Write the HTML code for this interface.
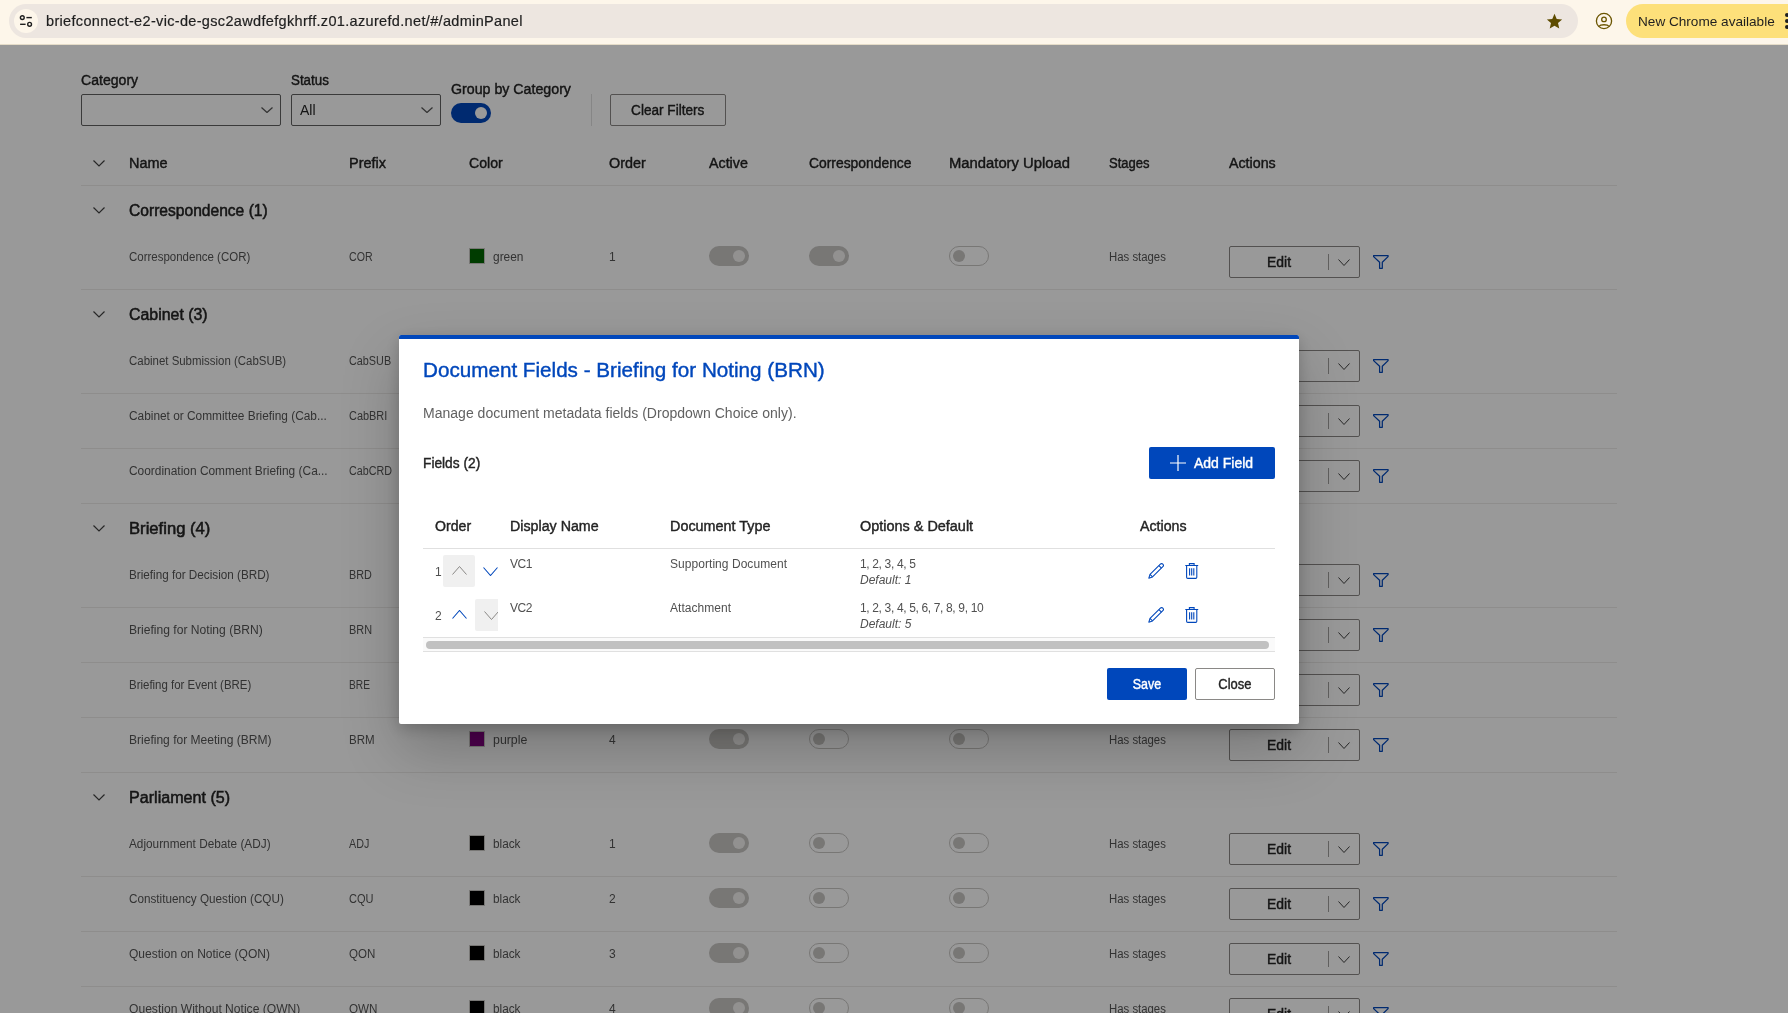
<!DOCTYPE html>
<html><head><meta charset="utf-8">
<style>
html,body{margin:0;padding:0}
svg{display:block}
body{width:1788px;height:1013px;overflow:hidden;position:relative;font-family:"Liberation Sans",sans-serif;background:#fff;color:#242424}
.a{position:absolute;white-space:nowrap}
.t{position:absolute;white-space:nowrap;line-height:20px;height:20px}
#chrome{will-change:transform;position:absolute;left:0;top:0;width:1788px;height:45px;background:#fdf6ea;overflow:hidden}
#app{position:absolute;left:0;top:0;width:1788px;height:1013px;background:#fff;overflow:hidden;will-change:transform}
#ov{position:absolute;left:0;top:45px;width:1788px;height:968px;background:rgba(0,0,0,.4)}
.lbl{font-size:14px;-webkit-text-stroke:0.4px #242424;color:#242424}
.hd{font-size:14px;-webkit-text-stroke:0.4px #242424;color:#242424}
.grp{font-size:15.6px;-webkit-text-stroke:0.5px #242424;color:#242424}
.cell{font-size:12px;color:#555;transform-origin:0 50%}
.line{position:absolute;left:81px;width:1536px;height:1px;background:#edebe9}
.dd{position:absolute;box-sizing:border-box;border:1px solid #616161;border-radius:2px;height:32px;top:94px}
.tg{position:absolute;box-sizing:border-box;width:40px;height:20px;border-radius:10px}
.tg.on{background:#c8c6c4}
.tg.on:after{content:"";position:absolute;right:4px;top:4px;width:12px;height:12px;border-radius:6px;background:#f3f2f1}
.tg.off{border:1px solid #c8c6c4;background:transparent}
.tg.off:after{content:"";position:absolute;left:3px;top:3px;width:12px;height:12px;border-radius:6px;background:#c8c6c4}
.sw{position:absolute;width:16px;height:16px;box-sizing:border-box;border:1px solid #c8c6c4}
.eb{position:absolute;box-sizing:border-box;width:131px;height:32px;border:1px solid #8a8886;border-radius:2px;background:#fff}
.eb .e{position:absolute;left:0;width:99px;top:0;line-height:30px;text-align:center;font-size:14px;-webkit-text-stroke:0.4px #242424;color:#242424}
.eb .dv{position:absolute;left:98px;top:7px;width:1px;height:16px;background:#a19f9d}
.eb svg{position:absolute;left:108px;top:12px}
#modal{will-change:transform;position:absolute;left:399px;top:335px;width:900px;height:389px;background:#fff;border-radius:2px;box-shadow:0 25.6px 57.6px rgba(0,0,0,.22),0 4.8px 14.4px rgba(0,0,0,.18);overflow:hidden}
#modal .bar{position:absolute;left:0;top:0;width:900px;height:4px;background:#0047bb}
.mt{font-size:12px;letter-spacing:-0.3px;color:#505050}
.mh{font-size:14px;-webkit-text-stroke:0.4px #242424;color:#242424}
</style></head><body>
<div id="app">
<div class="t lbl" style="left:81px;top:70px;;transform:scaleX(1.0053);transform-origin:0 50%">Category</div>
<div class="t lbl" style="left:291px;top:70px;;transform:scaleX(0.9525);transform-origin:0 50%">Status</div>
<div class="t lbl" style="left:451px;top:79px;;transform:scaleX(1.0143);transform-origin:0 50%">Group by Category</div>
<div class="dd" style="left:81px;width:200px"><div class="a" style="left:179px;top:12px"><svg width="12" height="6" viewBox="0 0 12 6"><path d="M0.5 0.5 L6.0 5.5 L11.5 0.5" fill="none" stroke="#555" stroke-width="1.25"/></svg></div></div>
<div class="dd" style="left:291px;width:150px"><div class="t" style="left:8px;top:5px;font-size:14px;color:#242424">All</div><div class="a" style="left:129px;top:12px"><svg width="12" height="6" viewBox="0 0 12 6"><path d="M0.5 0.5 L6.0 5.5 L11.5 0.5" fill="none" stroke="#555" stroke-width="1.25"/></svg></div></div>
<div class="a" style="left:451px;top:103px;width:40px;height:20px;border-radius:10px;background:#0047bb"><div class="a" style="left:24px;top:4px;width:12px;height:12px;border-radius:6px;background:#fff"></div></div>
<div class="a" style="left:591px;top:94px;width:1px;height:32px;background:#e0e0e0"></div>
<div class="a" style="left:610px;top:94px;width:116px;height:32px;box-sizing:border-box;border:1px solid #8a8886;border-radius:2px;line-height:30px;text-align:center;font-size:14px;-webkit-text-stroke:0.4px #242424;color:#242424"><span style="display:inline-block;transform:scaleX(0.9711)">Clear Filters</span></div>
<div class="a" style="left:93px;top:160px"><svg width="12" height="6.5" viewBox="0 0 12 6.5"><path d="M0.5 0.5 L6.0 6.0 L11.5 0.5" fill="none" stroke="#424242" stroke-width="1.2"/></svg></div>
<div class="t hd" style="left:129px;top:153px;;transform:scaleX(1.0333);transform-origin:0 50%">Name</div>
<div class="t hd" style="left:349px;top:153px;;transform:scaleX(1.0343);transform-origin:0 50%">Prefix</div>
<div class="t hd" style="left:469px;top:153px;;transform:scaleX(1.0059);transform-origin:0 50%">Color</div>
<div class="t hd" style="left:609px;top:153px;;transform:scaleX(1.0250);transform-origin:0 50%">Order</div>
<div class="t hd" style="left:709px;top:153px;;transform:scaleX(1.0184);transform-origin:0 50%">Active</div>
<div class="t hd" style="left:809px;top:153px;;transform:scaleX(0.9904);transform-origin:0 50%">Correspondence</div>
<div class="t hd" style="left:949px;top:153px;;transform:scaleX(1.0575);transform-origin:0 50%">Mandatory Upload</div>
<div class="t hd" style="left:1109px;top:153px;;transform:scaleX(0.9318);transform-origin:0 50%">Stages</div>
<div class="t hd" style="left:1229px;top:153px;;transform:scaleX(1.0174);transform-origin:0 50%">Actions</div>
<div class="line" style="top:185px"></div>
<div class="a" style="left:93px;top:207px"><svg width="12" height="6.5" viewBox="0 0 12 6.5"><path d="M0.5 0.5 L6.0 6.0 L11.5 0.5" fill="none" stroke="#424242" stroke-width="1.2"/></svg></div>
<div class="t grp" style="left:129px;top:201px;;transform:scaleX(1.0000);transform-origin:0 50%">Correspondence (1)</div>
<div class="t cell" style="left:129px;top:247px;transform:scaleX(0.9571)">Correspondence (COR)</div>
<div class="t cell" style="left:349px;top:247px;transform:scaleX(0.8846)">COR</div>
<div class="sw" style="left:469px;top:247.5px;background:#006400"></div>
<div class="t cell" style="left:493px;top:247px;transform:scaleX(0.9933)">green</div>
<div class="t cell" style="left:609px;top:247px;">1</div>
<div class="tg on" style="left:709px;top:246px"></div>
<div class="tg on" style="left:809px;top:246px"></div>
<div class="tg off" style="left:949px;top:246px"></div>
<div class="t cell" style="left:1109px;top:247px;transform:scaleX(0.9475)">Has stages</div>
<div class="eb" style="left:1229px;top:246px"><div class="e"><span style="display:inline-block;transform:scaleX(0.9958)">Edit</span></div><div class="dv"></div><svg width="12" height="7" viewBox="0 0 12 7"><path d="M0.5 0.5 L6.0 6.5 L11.5 0.5" fill="none" stroke="#424242" stroke-width="1"/></svg></div>
<div class="a" style="left:1373px;top:254px"><svg width="17" height="16" viewBox="0 0 17 16"><path d="M0.6 1.6 H15.1 V2.6 L9.3 8.3 V14.3 H6.6 V8.3 L0.6 2.6 Z" fill="none" stroke="#0047bb" stroke-width="1.25" stroke-linejoin="round"/></svg></div>
<div class="line" style="top:289px"></div>
<div class="a" style="left:93px;top:311px"><svg width="12" height="6.5" viewBox="0 0 12 6.5"><path d="M0.5 0.5 L6.0 6.0 L11.5 0.5" fill="none" stroke="#424242" stroke-width="1.2"/></svg></div>
<div class="t grp" style="left:129px;top:305px;;transform:scaleX(1.0195);transform-origin:0 50%">Cabinet (3)</div>
<div class="t cell" style="left:129px;top:351px;transform:scaleX(0.9537)">Cabinet Submission (CabSUB)</div>
<div class="t cell" style="left:349px;top:351px;transform:scaleX(0.9022)">CabSUB</div>
<div class="sw" style="left:469px;top:351.5px;background:#000"></div>
<div class="t cell" style="left:493px;top:351px;transform:scaleX(0.9821)">black</div>
<div class="t cell" style="left:609px;top:351px;">1</div>
<div class="tg on" style="left:709px;top:350px"></div>
<div class="tg off" style="left:809px;top:350px"></div>
<div class="tg off" style="left:949px;top:350px"></div>
<div class="t cell" style="left:1109px;top:351px;transform:scaleX(0.9475)">Has stages</div>
<div class="eb" style="left:1229px;top:350px"><div class="e"><span style="display:inline-block;transform:scaleX(0.9958)">Edit</span></div><div class="dv"></div><svg width="12" height="7" viewBox="0 0 12 7"><path d="M0.5 0.5 L6.0 6.5 L11.5 0.5" fill="none" stroke="#424242" stroke-width="1"/></svg></div>
<div class="a" style="left:1373px;top:358px"><svg width="17" height="16" viewBox="0 0 17 16"><path d="M0.6 1.6 H15.1 V2.6 L9.3 8.3 V14.3 H6.6 V8.3 L0.6 2.6 Z" fill="none" stroke="#0047bb" stroke-width="1.25" stroke-linejoin="round"/></svg></div>
<div class="line" style="top:393px"></div>
<div class="t cell" style="left:129px;top:406px;transform:scaleX(0.9889)">Cabinet or Committee Briefing (Cab...</div>
<div class="t cell" style="left:349px;top:406px;transform:scaleX(0.9098)">CabBRI</div>
<div class="sw" style="left:469px;top:406.5px;background:#000"></div>
<div class="t cell" style="left:493px;top:406px;transform:scaleX(0.9821)">black</div>
<div class="t cell" style="left:609px;top:406px;">2</div>
<div class="tg on" style="left:709px;top:405px"></div>
<div class="tg off" style="left:809px;top:405px"></div>
<div class="tg off" style="left:949px;top:405px"></div>
<div class="t cell" style="left:1109px;top:406px;transform:scaleX(0.9475)">Has stages</div>
<div class="eb" style="left:1229px;top:405px"><div class="e"><span style="display:inline-block;transform:scaleX(0.9958)">Edit</span></div><div class="dv"></div><svg width="12" height="7" viewBox="0 0 12 7"><path d="M0.5 0.5 L6.0 6.5 L11.5 0.5" fill="none" stroke="#424242" stroke-width="1"/></svg></div>
<div class="a" style="left:1373px;top:413px"><svg width="17" height="16" viewBox="0 0 17 16"><path d="M0.6 1.6 H15.1 V2.6 L9.3 8.3 V14.3 H6.6 V8.3 L0.6 2.6 Z" fill="none" stroke="#0047bb" stroke-width="1.25" stroke-linejoin="round"/></svg></div>
<div class="line" style="top:448px"></div>
<div class="t cell" style="left:129px;top:461px;transform:scaleX(0.9930)">Coordination Comment Briefing (Ca...</div>
<div class="t cell" style="left:349px;top:461px;transform:scaleX(0.8958)">CabCRD</div>
<div class="sw" style="left:469px;top:461.5px;background:#000"></div>
<div class="t cell" style="left:493px;top:461px;transform:scaleX(0.9821)">black</div>
<div class="t cell" style="left:609px;top:461px;">3</div>
<div class="tg on" style="left:709px;top:460px"></div>
<div class="tg off" style="left:809px;top:460px"></div>
<div class="tg off" style="left:949px;top:460px"></div>
<div class="t cell" style="left:1109px;top:461px;transform:scaleX(0.9475)">Has stages</div>
<div class="eb" style="left:1229px;top:460px"><div class="e"><span style="display:inline-block;transform:scaleX(0.9958)">Edit</span></div><div class="dv"></div><svg width="12" height="7" viewBox="0 0 12 7"><path d="M0.5 0.5 L6.0 6.5 L11.5 0.5" fill="none" stroke="#424242" stroke-width="1"/></svg></div>
<div class="a" style="left:1373px;top:468px"><svg width="17" height="16" viewBox="0 0 17 16"><path d="M0.6 1.6 H15.1 V2.6 L9.3 8.3 V14.3 H6.6 V8.3 L0.6 2.6 Z" fill="none" stroke="#0047bb" stroke-width="1.25" stroke-linejoin="round"/></svg></div>
<div class="line" style="top:503px"></div>
<div class="a" style="left:93px;top:525px"><svg width="12" height="6.5" viewBox="0 0 12 6.5"><path d="M0.5 0.5 L6.0 6.0 L11.5 0.5" fill="none" stroke="#424242" stroke-width="1.2"/></svg></div>
<div class="t grp" style="left:129px;top:519px;;transform:scaleX(1.0667);transform-origin:0 50%">Briefing (4)</div>
<div class="t cell" style="left:129px;top:565px;transform:scaleX(0.9755)">Briefing for Decision (BRD)</div>
<div class="t cell" style="left:349px;top:565px;transform:scaleX(0.9000)">BRD</div>
<div class="sw" style="left:469px;top:565.5px;background:#000"></div>
<div class="t cell" style="left:493px;top:565px;transform:scaleX(0.9821)">black</div>
<div class="t cell" style="left:609px;top:565px;">1</div>
<div class="tg on" style="left:709px;top:564px"></div>
<div class="tg off" style="left:809px;top:564px"></div>
<div class="tg off" style="left:949px;top:564px"></div>
<div class="t cell" style="left:1109px;top:565px;transform:scaleX(0.9475)">Has stages</div>
<div class="eb" style="left:1229px;top:564px"><div class="e"><span style="display:inline-block;transform:scaleX(0.9958)">Edit</span></div><div class="dv"></div><svg width="12" height="7" viewBox="0 0 12 7"><path d="M0.5 0.5 L6.0 6.5 L11.5 0.5" fill="none" stroke="#424242" stroke-width="1"/></svg></div>
<div class="a" style="left:1373px;top:572px"><svg width="17" height="16" viewBox="0 0 17 16"><path d="M0.6 1.6 H15.1 V2.6 L9.3 8.3 V14.3 H6.6 V8.3 L0.6 2.6 Z" fill="none" stroke="#0047bb" stroke-width="1.25" stroke-linejoin="round"/></svg></div>
<div class="line" style="top:607px"></div>
<div class="t cell" style="left:129px;top:620px;transform:scaleX(1.0076)">Briefing for Noting (BRN)</div>
<div class="t cell" style="left:349px;top:620px;transform:scaleX(0.9083)">BRN</div>
<div class="sw" style="left:469px;top:620.5px;background:#000"></div>
<div class="t cell" style="left:493px;top:620px;transform:scaleX(0.9821)">black</div>
<div class="t cell" style="left:609px;top:620px;">2</div>
<div class="tg on" style="left:709px;top:619px"></div>
<div class="tg off" style="left:809px;top:619px"></div>
<div class="tg off" style="left:949px;top:619px"></div>
<div class="t cell" style="left:1109px;top:620px;transform:scaleX(0.9475)">Has stages</div>
<div class="eb" style="left:1229px;top:619px"><div class="e"><span style="display:inline-block;transform:scaleX(0.9958)">Edit</span></div><div class="dv"></div><svg width="12" height="7" viewBox="0 0 12 7"><path d="M0.5 0.5 L6.0 6.5 L11.5 0.5" fill="none" stroke="#424242" stroke-width="1"/></svg></div>
<div class="a" style="left:1373px;top:627px"><svg width="17" height="16" viewBox="0 0 17 16"><path d="M0.6 1.6 H15.1 V2.6 L9.3 8.3 V14.3 H6.6 V8.3 L0.6 2.6 Z" fill="none" stroke="#0047bb" stroke-width="1.25" stroke-linejoin="round"/></svg></div>
<div class="line" style="top:662px"></div>
<div class="t cell" style="left:129px;top:675px;transform:scaleX(0.9551)">Briefing for Event (BRE)</div>
<div class="t cell" style="left:349px;top:675px;transform:scaleX(0.8500)">BRE</div>
<div class="sw" style="left:469px;top:675.5px;background:#000"></div>
<div class="t cell" style="left:493px;top:675px;transform:scaleX(0.9821)">black</div>
<div class="t cell" style="left:609px;top:675px;">3</div>
<div class="tg on" style="left:709px;top:674px"></div>
<div class="tg off" style="left:809px;top:674px"></div>
<div class="tg off" style="left:949px;top:674px"></div>
<div class="t cell" style="left:1109px;top:675px;transform:scaleX(0.9475)">Has stages</div>
<div class="eb" style="left:1229px;top:674px"><div class="e"><span style="display:inline-block;transform:scaleX(0.9958)">Edit</span></div><div class="dv"></div><svg width="12" height="7" viewBox="0 0 12 7"><path d="M0.5 0.5 L6.0 6.5 L11.5 0.5" fill="none" stroke="#424242" stroke-width="1"/></svg></div>
<div class="a" style="left:1373px;top:682px"><svg width="17" height="16" viewBox="0 0 17 16"><path d="M0.6 1.6 H15.1 V2.6 L9.3 8.3 V14.3 H6.6 V8.3 L0.6 2.6 Z" fill="none" stroke="#0047bb" stroke-width="1.25" stroke-linejoin="round"/></svg></div>
<div class="line" style="top:717px"></div>
<div class="t cell" style="left:129px;top:730px;transform:scaleX(1.0028)">Briefing for Meeting (BRM)</div>
<div class="t cell" style="left:349px;top:730px;transform:scaleX(0.9600)">BRM</div>
<div class="sw" style="left:469px;top:730.5px;background:#800080"></div>
<div class="t cell" style="left:493px;top:730px;transform:scaleX(1.0303)">purple</div>
<div class="t cell" style="left:609px;top:730px;">4</div>
<div class="tg on" style="left:709px;top:729px"></div>
<div class="tg off" style="left:809px;top:729px"></div>
<div class="tg off" style="left:949px;top:729px"></div>
<div class="t cell" style="left:1109px;top:730px;transform:scaleX(0.9475)">Has stages</div>
<div class="eb" style="left:1229px;top:729px"><div class="e"><span style="display:inline-block;transform:scaleX(0.9958)">Edit</span></div><div class="dv"></div><svg width="12" height="7" viewBox="0 0 12 7"><path d="M0.5 0.5 L6.0 6.5 L11.5 0.5" fill="none" stroke="#424242" stroke-width="1"/></svg></div>
<div class="a" style="left:1373px;top:737px"><svg width="17" height="16" viewBox="0 0 17 16"><path d="M0.6 1.6 H15.1 V2.6 L9.3 8.3 V14.3 H6.6 V8.3 L0.6 2.6 Z" fill="none" stroke="#0047bb" stroke-width="1.25" stroke-linejoin="round"/></svg></div>
<div class="line" style="top:772px"></div>
<div class="a" style="left:93px;top:794px"><svg width="12" height="6.5" viewBox="0 0 12 6.5"><path d="M0.5 0.5 L6.0 6.0 L11.5 0.5" fill="none" stroke="#424242" stroke-width="1.2"/></svg></div>
<div class="t grp" style="left:129px;top:788px;;transform:scaleX(1.0330);transform-origin:0 50%">Parliament (5)</div>
<div class="t cell" style="left:129px;top:834px;transform:scaleX(0.9826)">Adjournment Debate (ADJ)</div>
<div class="t cell" style="left:349px;top:834px;transform:scaleX(0.8955)">ADJ</div>
<div class="sw" style="left:469px;top:834.5px;background:#000"></div>
<div class="t cell" style="left:493px;top:834px;transform:scaleX(0.9821)">black</div>
<div class="t cell" style="left:609px;top:834px;">1</div>
<div class="tg on" style="left:709px;top:833px"></div>
<div class="tg off" style="left:809px;top:833px"></div>
<div class="tg off" style="left:949px;top:833px"></div>
<div class="t cell" style="left:1109px;top:834px;transform:scaleX(0.9475)">Has stages</div>
<div class="eb" style="left:1229px;top:833px"><div class="e"><span style="display:inline-block;transform:scaleX(0.9958)">Edit</span></div><div class="dv"></div><svg width="12" height="7" viewBox="0 0 12 7"><path d="M0.5 0.5 L6.0 6.5 L11.5 0.5" fill="none" stroke="#424242" stroke-width="1"/></svg></div>
<div class="a" style="left:1373px;top:841px"><svg width="17" height="16" viewBox="0 0 17 16"><path d="M0.6 1.6 H15.1 V2.6 L9.3 8.3 V14.3 H6.6 V8.3 L0.6 2.6 Z" fill="none" stroke="#0047bb" stroke-width="1.25" stroke-linejoin="round"/></svg></div>
<div class="line" style="top:876px"></div>
<div class="t cell" style="left:129px;top:889px;transform:scaleX(0.9753)">Constituency Question (CQU)</div>
<div class="t cell" style="left:349px;top:889px;transform:scaleX(0.9192)">CQU</div>
<div class="sw" style="left:469px;top:889.5px;background:#000"></div>
<div class="t cell" style="left:493px;top:889px;transform:scaleX(0.9821)">black</div>
<div class="t cell" style="left:609px;top:889px;">2</div>
<div class="tg on" style="left:709px;top:888px"></div>
<div class="tg off" style="left:809px;top:888px"></div>
<div class="tg off" style="left:949px;top:888px"></div>
<div class="t cell" style="left:1109px;top:889px;transform:scaleX(0.9475)">Has stages</div>
<div class="eb" style="left:1229px;top:888px"><div class="e"><span style="display:inline-block;transform:scaleX(0.9958)">Edit</span></div><div class="dv"></div><svg width="12" height="7" viewBox="0 0 12 7"><path d="M0.5 0.5 L6.0 6.5 L11.5 0.5" fill="none" stroke="#424242" stroke-width="1"/></svg></div>
<div class="a" style="left:1373px;top:896px"><svg width="17" height="16" viewBox="0 0 17 16"><path d="M0.6 1.6 H15.1 V2.6 L9.3 8.3 V14.3 H6.6 V8.3 L0.6 2.6 Z" fill="none" stroke="#0047bb" stroke-width="1.25" stroke-linejoin="round"/></svg></div>
<div class="line" style="top:931px"></div>
<div class="t cell" style="left:129px;top:944px;transform:scaleX(1.0014)">Question on Notice (QON)</div>
<div class="t cell" style="left:349px;top:944px;transform:scaleX(0.9630)">QON</div>
<div class="sw" style="left:469px;top:944.5px;background:#000"></div>
<div class="t cell" style="left:493px;top:944px;transform:scaleX(0.9821)">black</div>
<div class="t cell" style="left:609px;top:944px;">3</div>
<div class="tg on" style="left:709px;top:943px"></div>
<div class="tg off" style="left:809px;top:943px"></div>
<div class="tg off" style="left:949px;top:943px"></div>
<div class="t cell" style="left:1109px;top:944px;transform:scaleX(0.9475)">Has stages</div>
<div class="eb" style="left:1229px;top:943px"><div class="e"><span style="display:inline-block;transform:scaleX(0.9958)">Edit</span></div><div class="dv"></div><svg width="12" height="7" viewBox="0 0 12 7"><path d="M0.5 0.5 L6.0 6.5 L11.5 0.5" fill="none" stroke="#424242" stroke-width="1"/></svg></div>
<div class="a" style="left:1373px;top:951px"><svg width="17" height="16" viewBox="0 0 17 16"><path d="M0.6 1.6 H15.1 V2.6 L9.3 8.3 V14.3 H6.6 V8.3 L0.6 2.6 Z" fill="none" stroke="#0047bb" stroke-width="1.25" stroke-linejoin="round"/></svg></div>
<div class="line" style="top:986px"></div>
<div class="t cell" style="left:129px;top:999px;transform:scaleX(1.0076)">Question Without Notice (QWN)</div>
<div class="t cell" style="left:349px;top:999px;transform:scaleX(0.9724)">QWN</div>
<div class="sw" style="left:469px;top:999.5px;background:#000"></div>
<div class="t cell" style="left:493px;top:999px;transform:scaleX(0.9821)">black</div>
<div class="t cell" style="left:609px;top:999px;">4</div>
<div class="tg on" style="left:709px;top:998px"></div>
<div class="tg off" style="left:809px;top:998px"></div>
<div class="tg off" style="left:949px;top:998px"></div>
<div class="t cell" style="left:1109px;top:999px;transform:scaleX(0.9475)">Has stages</div>
<div class="eb" style="left:1229px;top:998px"><div class="e"><span style="display:inline-block;transform:scaleX(0.9958)">Edit</span></div><div class="dv"></div><svg width="12" height="7" viewBox="0 0 12 7"><path d="M0.5 0.5 L6.0 6.5 L11.5 0.5" fill="none" stroke="#424242" stroke-width="1"/></svg></div>
<div class="a" style="left:1373px;top:1006px"><svg width="17" height="16" viewBox="0 0 17 16"><path d="M0.6 1.6 H15.1 V2.6 L9.3 8.3 V14.3 H6.6 V8.3 L0.6 2.6 Z" fill="none" stroke="#0047bb" stroke-width="1.25" stroke-linejoin="round"/></svg></div>
<div class="line" style="top:1041px"></div>
</div>
<div id="ov"></div>
<div id="chrome">
  <div class="a" style="left:9px;top:4px;width:1569px;height:34px;border-radius:17px;background:#ede6e0"></div>
  <div class="a" style="left:0;top:44px;width:1788px;height:1px;background:#e5dcc8"></div>
  <div class="a" style="left:14px;top:9px;width:24px;height:24px;border-radius:12px;background:#fdf6ea"></div>
  <svg class="a" style="left:18px;top:13px" width="16" height="16" viewBox="0 0 16 16"><g fill="none" stroke="#1f1f1f" stroke-width="1.4"><circle cx="4.3" cy="4.6" r="1.9"/><line x1="8.4" y1="4.6" x2="13.8" y2="4.6"/><circle cx="11.6" cy="11.3" r="1.9"/><line x1="2.1" y1="11.3" x2="7.6" y2="11.3"/></g></svg>
  <div class="a" style="left:46px;top:11px;line-height:20px;font-size:14.5px;letter-spacing:0.33px;-webkit-text-stroke:0.2px #1f1f1f;color:#1f1f1f">briefconnect-e2-vic-de-gsc2awdfefgkhrff.z01.azurefd.net/#/adminPanel</div>
  <svg class="a" style="left:1545.5px;top:13px" width="17" height="17" viewBox="0 0 16 16"><path d="M8 0.8 L10.1 5.6 L15.2 6.1 L11.3 9.5 L12.5 14.6 L8 11.9 L3.5 14.6 L4.7 9.5 L0.8 6.1 L5.9 5.6 Z" fill="#5e4c00"/></svg>
  <svg class="a" style="left:1595px;top:12px" width="18" height="18" viewBox="0 0 18 18"><g fill="none" stroke="#6b5500" stroke-width="1.3"><circle cx="9" cy="9" r="7.6"/><circle cx="9" cy="7.4" r="2.3"/><path d="M3.9 14.3 C5.5 12.2 12.5 12.2 14.1 14.3"/></g></svg>
  <div class="a" style="left:1626px;top:4px;width:200px;height:34px;border-radius:17px;background:#fde07a"></div>
  <div class="a" style="left:1638px;top:12px;line-height:20px;font-size:13.6px;color:#1f1f1f">New Chrome available</div>
  <div class="a" style="left:1785px;top:13px;width:4px;height:4px;border-radius:2px;background:#1f1f1f"></div>
  <div class="a" style="left:1785px;top:19px;width:4px;height:4px;border-radius:2px;background:#1f1f1f"></div>
  <div class="a" style="left:1785px;top:25px;width:4px;height:4px;border-radius:2px;background:#1f1f1f"></div>
</div>
<div id="modal">
<div class="bar"></div>
<div class="t " style="left:24px;top:25px;font-size:20.6px;-webkit-text-stroke:0.4px #0047bb;color:#0047bb;line-height:24px;height:24px;top:23px;transform:scaleX(1.0028);transform-origin:0 50%">Document Fields - Briefing for Noting (BRN)</div>
<div class="t " style="left:24px;top:68px;font-size:14px;color:#616161;transform:scaleX(1.0022);transform-origin:0 50%">Manage document metadata fields (Dropdown Choice only).</div>
<div class="t mh" style="left:24px;top:118px;;transform:scaleX(0.9807);transform-origin:0 50%">Fields (2)</div>
<div class="a" style="left:750px;top:112px;width:126px;height:32px;border-radius:2px;background:#0047bb"><svg class="a" style="left:21px;top:8px" width="16" height="16" viewBox="0 0 16 16"><path d="M8 0 V16 M0 8 H16" stroke="#fff" stroke-width="1.2"/></svg><div class="t" style="left:45px;top:6px;font-size:14px;-webkit-text-stroke:0.4px #fff;color:#fff">Add Field</div></div>
<div class="t mh" style="left:36px;top:181px;;transform:scaleX(1.0083);transform-origin:0 50%">Order</div>
<div class="t mh" style="left:111px;top:181px;;transform:scaleX(1.0174);transform-origin:0 50%">Display Name</div>
<div class="t mh" style="left:271px;top:181px;;transform:scaleX(1.0268);transform-origin:0 50%">Document Type</div>
<div class="t mh" style="left:461px;top:181px;;transform:scaleX(1.0309);transform-origin:0 50%">Options &amp; Default</div>
<div class="t mh" style="left:741px;top:181px;;transform:scaleX(1.0130);transform-origin:0 50%">Actions</div>
<div class="a" style="left:24px;top:213px;width:852px;height:1px;background:#e0e0e0"></div>
<div class="t mt" style="left:36px;top:227px;">1</div>
<div class="a" style="left:44px;top:220px;width:55px;height:32px;overflow:hidden"><div class="a" style="left:0px;top:0px;width:32px;height:32px;border-radius:2px;background:#f0f0f0"><div class="a" style="left:9px;top:11px"><svg width="15" height="9" viewBox="0 0 15 9"><path d="M0.5 8.5 L7.5 0.5 L14.5 8.5" fill="none" stroke="#8a8886" stroke-width="1"/></svg></div></div><div class="a" style="left:40px;top:12px"><svg width="15" height="9" viewBox="0 0 15 9"><path d="M0.5 0.5 L7.5 8.5 L14.5 0.5" fill="none" stroke="#0047bb" stroke-width="1.05"/></svg></div></div>
<div class="t mt" style="left:111px;top:219px;letter-spacing:-0.4px">VC1</div>
<div class="t mt" style="left:271px;top:219px;letter-spacing:0.05px">Supporting Document</div>
<div class="t mt" style="left:461px;top:219px;letter-spacing:-0.35px">1, 2, 3, 4, 5</div>
<div class="t mt" style="left:461px;top:235px;font-style:italic;letter-spacing:0px">Default: 1</div>
<svg class="a" style="left:749px;top:228px" width="16" height="16" viewBox="0 0 16 16"><g fill="none" stroke="#0047bb" stroke-width="1.05" stroke-linejoin="round"><path d="M12.36 1.16 A1.75 1.75 0 0 1 14.84 3.64 L4.51 13.97 L0.8 15.2 L2.03 11.49 Z"/><path d="M2.03 11.49 L4.51 13.97"/><path d="M10.95 2.57 L13.43 5.05"/></g></svg>
<svg class="a" style="left:786px;top:228px" width="14" height="16" viewBox="0 0 14 16"><g fill="none" stroke="#0047bb" stroke-width="1.1"><path d="M0.3 2.5 H13.2"/><path d="M4.4 2.5 V0.6 H9.1 V2.5"/><path d="M1.6 2.5 V14.2 Q1.6 15.4 2.8 15.4 H10.6 Q11.8 15.4 11.8 14.2 V2.5"/><path d="M4.6 5.3 V12.6 M6.7 5.3 V12.6 M8.8 5.3 V12.6"/></g></svg>
<div class="t mt" style="left:36px;top:271px;">2</div>
<div class="a" style="left:44px;top:264px;width:55px;height:32px;overflow:hidden"><div class="a" style="left:9px;top:11px"><svg width="15" height="9" viewBox="0 0 15 9"><path d="M0.5 8.5 L7.5 0.5 L14.5 8.5" fill="none" stroke="#0047bb" stroke-width="1.05"/></svg></div><div class="a" style="left:32px;top:0px;width:32px;height:32px;border-radius:2px;background:#f0f0f0"><div class="a" style="left:9px;top:12px"><svg width="15" height="9" viewBox="0 0 15 9"><path d="M0.5 0.5 L7.5 8.5 L14.5 0.5" fill="none" stroke="#8a8886" stroke-width="1"/></svg></div></div></div>
<div class="t mt" style="left:111px;top:263px;letter-spacing:-0.4px">VC2</div>
<div class="t mt" style="left:271px;top:263px;letter-spacing:0.05px">Attachment</div>
<div class="t mt" style="left:461px;top:263px;letter-spacing:-0.35px">1, 2, 3, 4, 5, 6, 7, 8, 9, 10</div>
<div class="t mt" style="left:461px;top:279px;font-style:italic;letter-spacing:0px">Default: 5</div>
<svg class="a" style="left:749px;top:272px" width="16" height="16" viewBox="0 0 16 16"><g fill="none" stroke="#0047bb" stroke-width="1.05" stroke-linejoin="round"><path d="M12.36 1.16 A1.75 1.75 0 0 1 14.84 3.64 L4.51 13.97 L0.8 15.2 L2.03 11.49 Z"/><path d="M2.03 11.49 L4.51 13.97"/><path d="M10.95 2.57 L13.43 5.05"/></g></svg>
<svg class="a" style="left:786px;top:272px" width="14" height="16" viewBox="0 0 14 16"><g fill="none" stroke="#0047bb" stroke-width="1.1"><path d="M0.3 2.5 H13.2"/><path d="M4.4 2.5 V0.6 H9.1 V2.5"/><path d="M1.6 2.5 V14.2 Q1.6 15.4 2.8 15.4 H10.6 Q11.8 15.4 11.8 14.2 V2.5"/><path d="M4.6 5.3 V12.6 M6.7 5.3 V12.6 M8.8 5.3 V12.6"/></g></svg>
<div class="a" style="left:24px;top:302px;width:852px;height:1px;background:#e0e0e0"></div>
<div class="a" style="left:24px;top:303px;width:852px;height:13px;background:#fafafa"></div>
<div class="a" style="left:27px;top:306px;width:843px;height:8px;border-radius:4px;background:#c1c1c1"></div>
<div class="a" style="left:24px;top:316px;width:852px;height:1px;background:#e0e0e0"></div>
<div class="a" style="left:708px;top:333px;width:80px;height:32px;border-radius:2px;background:#0047bb;line-height:32px;text-align:center;font-size:14px;-webkit-text-stroke:0.4px #fff;color:#fff"><span style="display:inline-block;transform:scaleX(0.8906)">Save</span></div>
<div class="a" style="left:796px;top:333px;width:80px;height:32px;box-sizing:border-box;border:1px solid #8a8886;border-radius:2px;background:#fff;line-height:30px;text-align:center;font-size:14px;-webkit-text-stroke:0.4px #242424;color:#242424"><span style="display:inline-block;transform:scaleX(0.925)">Close</span></div>
</div>
</body></html>
